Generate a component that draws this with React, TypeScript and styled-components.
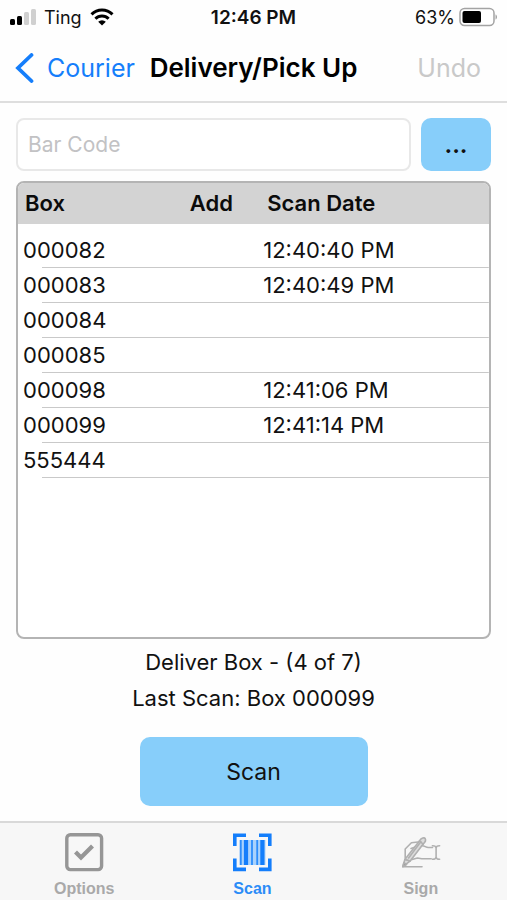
import React, { useState } from "react";
import styled, { createGlobalStyle, css } from "styled-components";

const GlobalStyle = createGlobalStyle`
  * { box-sizing: border-box; }
  body { margin: 0; background: #fefefe; }
  body, button, input { font-family: Inter, "Liberation Sans", sans-serif; }
  button { border: 0; padding: 0; background: none; color: inherit; cursor: pointer; }
`;

const Screen = styled.div`
  min-height: 100vh;
  display: flex;
  flex-direction: column;
  color: #111;
`;

const StatusBar = styled.div`
  display: grid;
  grid-template-columns: 1fr auto 1fr;
  align-items: center;
  height: 34px;
  padding: 0 10px;
  font-size: 18px;
`;

const StatusGroup = styled.div<{ $end?: boolean }>`
  display: flex;
  align-items: center;
  gap: ${(p) => (p.$end ? 4 : 8)}px;
  justify-content: ${(p) => (p.$end ? "flex-end" : "flex-start")};
`;

const Clock = styled.time`
  font-size: 19px;
  font-weight: 600;
`;

const NavBar = styled.header`
  display: grid;
  grid-template-columns: 1fr auto 1fr;
  align-items: center;
  height: 69px;
  padding: 0 15px;
  border-bottom: 2px solid #dedede;
`;

const BackLink = styled.a`
  display: flex;
  align-items: center;
  gap: 12px;
  color: #157efb;
  font-size: 25px;
  text-decoration: none;
`;

const Title = styled.h1`
  margin: 0;
  font-size: 26px;
  font-weight: 600;
  color: #000;
  white-space: nowrap;
`;

const UndoButton = styled.button`
  justify-self: end;
  padding-right: 11px;
  font-size: 25px;
  &:disabled { color: #c9c9c9; }
`;

const Content = styled.main`
  flex: 1;
  display: flex;
  flex-direction: column;
  padding: 15px 16px;
`;

const EntryRow = styled.form`
  display: flex;
  gap: 10px;
  height: 53px;
  margin-bottom: 10px;
`;

const CodeInput = styled.input`
  flex: 1;
  min-width: 0;
  padding: 0 10px;
  border: 2px solid #e8e8e8;
  border-radius: 8px;
  background: #fff;
  font-size: 21px;
  outline: none;
  &::placeholder { color: #c2c2c4; opacity: 1; }
`;

const ActionButton = styled.button<{ $large?: boolean }>`
  background: #87cefa;
  border-radius: 10px;
  color: #111;
  ${(p) =>
    p.$large
      ? css`
          width: 228px;
          height: 69px;
          font-size: 23px;
        `
      : css`
          width: 70px;
          font-size: 23px;
          font-weight: 700;
        `}
`;

const ListPanel = styled.section`
  flex: 1;
  border: 2px solid #b4b4b4;
  border-radius: 8px;
  overflow: hidden;
  background: #fff;
`;

const BoxTable = styled.table`
  width: 100%;
  border-collapse: collapse;
  table-layout: fixed;
  font-size: 22px;
`;

const HeadCell = styled.th<{ $width?: string }>`
  width: ${(p) => p.$width ?? "auto"};
  height: 41px;
  padding: 0 7px 2px;
  background: #d3d3d3;
  text-align: left;
  font-weight: 600;
  color: #0b0b0b;
  white-space: nowrap;
  &:last-child { padding-left: 9px; }
`;

const Spacer = styled.tbody`
  td { height: 9px; padding: 0; }
`;

const BoxRow = styled.tr`
  height: 35px;
  background: linear-gradient(#c9c9c9, #c9c9c9) right bottom / calc(100% - 24px) 1px no-repeat;
`;

const Cell = styled.td`
  padding: 0 5px 2px;
  white-space: nowrap;
`;

const Summary = styled.div`
  padding: 5px 0 21px;
  text-align: center;
  font-size: 22px;
  line-height: 36px;
`;

const SummaryLine = styled.p`
  margin: 0;
`;

const ScanArea = styled.div`
  display: flex;
  justify-content: center;
`;

const TabBar = styled.nav`
  display: grid;
  grid-template-columns: repeat(3, 1fr);
  height: 79px;
  padding-right: 2px;
  border-top: 2px solid #d9d9d9;
  background: #f7f7f7;
`;

const Tab = styled.button<{ $active: boolean }>`
  display: flex;
  flex-direction: column;
  align-items: center;
  gap: 7px;
  padding-top: 9px;
  font-family: "Liberation Sans", sans-serif;
  font-size: 16px;
  font-weight: 700;
  line-height: 20px;
  color: ${(p) => (p.$active ? "#2b8cf7" : "#a9a9a9")};
`;

const SignalIcon = () => (
  <svg width="26" height="18" viewBox="0 0 26 18" aria-hidden="true">
    <rect x="0" y="11" width="5" height="6" rx="1.5" fill="#000" />
    <rect x="7" y="8" width="5" height="9" rx="1.5" fill="#000" />
    <rect x="14" y="4" width="5" height="13" rx="1.5" fill="#d0d0d0" />
    <rect x="21" y="1" width="5" height="16" rx="1.5" fill="#d0d0d0" />
  </svg>
);

const WifiIcon = () => (
  <svg width="24" height="18" viewBox="0 0 24 18" fill="none" stroke="#000" strokeWidth="3" aria-hidden="true">
    <path d="M1.5 6.4a15 15 0 0 1 21 0" />
    <path d="M5.4 10.7a9.4 9.4 0 0 1 13.2 0" />
    <path d="M12 17.6l-3.8-3.8a5.4 5.4 0 0 1 7.6 0z" fill="#000" stroke="none" />
  </svg>
);

const BatteryIcon = () => (
  <svg width="38" height="20" viewBox="0 0 38 20" aria-hidden="true">
    <rect x="1" y="1.5" width="34" height="17" rx="4.5" fill="#fff" stroke="#a3a3a3" strokeWidth="1.5" />
    <rect x="3.5" y="4" width="18.5" height="12" rx="2" fill="#000" />
    <path d="M36.5 7.5c2 .6 2 4.4 0 5z" fill="#a3a3a3" />
  </svg>
);

const BackIcon = () => (
  <svg width="20" height="30" viewBox="0 0 20 30" fill="none" stroke="#157efb" strokeWidth="3.8" aria-hidden="true">
    <path d="M16.5 2L3 15L16.5 28" strokeLinecap="round" strokeLinejoin="miter" />
  </svg>
);

const OptionsIcon = () => (
  <svg width="40" height="40" viewBox="0 0 40 40" fill="none" stroke="#969696" aria-hidden="true">
    <rect x="2.8" y="2.8" width="34.8" height="34.8" rx="3.5" strokeWidth="3.4" />
    <path d="M11.5 20l5.5 5.5L28.5 14" strokeWidth="4.2" />
  </svg>
);

const ScanIcon = () => (
  <svg width="40" height="40" viewBox="0 0 40 40" fill="none" aria-hidden="true">
    <path
      d="M14 3.2H2.8V14M27 3.2h10.8V14M14 37.4H2.8V26.5M27 37.4h10.8V26.5"
      stroke="#147efb"
      strokeWidth="3.6"
    />
    <rect x="7.5" y="8" width="26" height="25" fill="#a9d2fc" />
    <path d="M8.8 8v25M20 8v25M25.2 8v25" stroke="#2c8dfb" strokeWidth="1.8" />
    <path d="M14 8v25M30.4 8v25" stroke="#147efb" strokeWidth="4.2" />
  </svg>
);

const SignIcon = () => (
  <svg
    width="40"
    height="40"
    viewBox="0 0 40 40"
    fill="none"
    stroke="#b0b0b0"
    strokeWidth="1.6"
    strokeLinecap="round"
    strokeLinejoin="round"
    aria-hidden="true"
  >
    <path d="M2 34.8H21" />
    <path d="M1.8 34.6l2-7L18.8 8.4c1.4-2.4 4.6-3.2 5.4-1.8s-.2 3.8-2.2 5.6L9 29.2z" fill="#dcdcdc" />
    <path d="M1.8 34.6l1.2-4 2.6 2z" fill="#999" />
    <path d="M3.8 27.6c1.6.1 3.8.8 5.2 1.6M18.4 9l3.8 3.2M20 9.6L7.6 26" />
    <path d="M4.2 26V17l6.2-6.2L17 10M10 16.4l3-1" />
    <path d="M21 13.8c2.8-.2 3.6 1.7 6.3 1.7h4.2M11 27.6l5.5-1.6 4.2.7h9.5" />
    <path d="M31.4 13.8c2.7 0 3.7.8 3.7 2.2v9c0 1.5-1 2.3-3.7 2.3M38.6 13.8c-2.6 0-3.5.8-3.5 2.2v9c0 1.5.9 2.3 3.5 2.3" />
  </svg>
);

const boxes = [
  { code: "000082", scanned: "12:40:40 PM" },
  { code: "000083", scanned: "12:40:49 PM" },
  { code: "000084", scanned: "" },
  { code: "000085", scanned: "" },
  { code: "000098", scanned: "12:41:06 PM" },
  { code: "000099", scanned: "12:41:14 PM" },
  { code: "555444", scanned: "" },
];

const tabs = [
  { name: "Options", Icon: OptionsIcon },
  { name: "Scan", Icon: ScanIcon },
  { name: "Sign", Icon: SignIcon },
];

export default function App() {
  const [active, setActive] = useState("Scan");
  const [code, setCode] = useState("");

  return (
    <>
      <GlobalStyle />
      <Screen>
        <StatusBar>
          <StatusGroup>
            <SignalIcon />
            <span>Ting</span>
            <WifiIcon />
          </StatusGroup>
          <Clock>12:46 PM</Clock>
          <StatusGroup $end>
            <span>63%</span>
            <BatteryIcon />
          </StatusGroup>
        </StatusBar>
        <NavBar>
          <BackLink href="#courier">
            <BackIcon />
            Courier
          </BackLink>
          <Title>Delivery/Pick Up</Title>
          <UndoButton type="button" disabled>
            Undo
          </UndoButton>
        </NavBar>
        <Content>
          <EntryRow onSubmit={(e) => e.preventDefault()}>
            <CodeInput
              aria-label="Bar Code"
              placeholder="Bar Code"
              value={code}
              onChange={(e) => setCode(e.target.value)}
            />
            <ActionButton type="button">...</ActionButton>
          </EntryRow>
          <ListPanel>
            <BoxTable>
              <thead>
                <tr>
                  <HeadCell scope="col" $width="35%">Box</HeadCell>
                  <HeadCell scope="col" $width="16%">Add</HeadCell>
                  <HeadCell scope="col">Scan Date</HeadCell>
                </tr>
              </thead>
              <Spacer aria-hidden="true">
                <tr>
                  <td colSpan={3} />
                </tr>
              </Spacer>
              <tbody>
                {boxes.map((box) => (
                  <BoxRow key={box.code}>
                    <Cell>{box.code}</Cell>
                    <Cell />
                    <Cell>{box.scanned}</Cell>
                  </BoxRow>
                ))}
              </tbody>
            </BoxTable>
          </ListPanel>
          <Summary>
            <SummaryLine>Deliver Box - (4 of 7)</SummaryLine>
            <SummaryLine>Last Scan: Box 000099</SummaryLine>
          </Summary>
          <ScanArea>
            <ActionButton type="button" $large>
              Scan
            </ActionButton>
          </ScanArea>
        </Content>
        <TabBar>
          {tabs.map(({ name, Icon }) => (
            <Tab
              key={name}
              type="button"
              $active={active === name}
              aria-current={active === name ? "page" : undefined}
              onClick={() => setActive(name)}
            >
              <Icon />
              {name}
            </Tab>
          ))}
        </TabBar>
      </Screen>
    </>
  );
}
